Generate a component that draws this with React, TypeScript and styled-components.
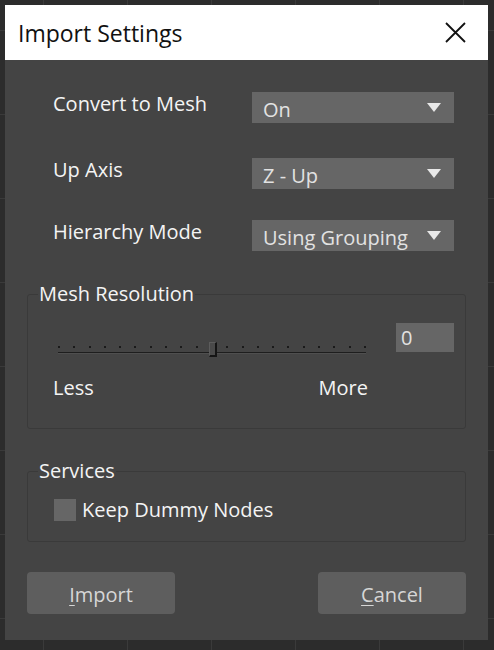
import styled, { createGlobalStyle } from 'styled-components'

const GlobalStyle = createGlobalStyle`
  html, body {
    margin: 0;
    padding: 0;
    background: #2c2c2c;
    font-family: "Open Sans", "Noto Sans", sans-serif;
  }
  * {
    box-sizing: border-box;
  }
`

const Page = styled.div`
  width: 494px;
  height: 650px;
  padding: 5px;
  background-color: #2c2c2c;
  background-image:
    linear-gradient(#3a3a3a 1px, transparent 1px),
    linear-gradient(90deg, #3a3a3a 1px, transparent 1px);
  background-size: 84px 84px;
  background-position: 43px 30px;
`

const Dialog = styled.div`
  width: 483px;
  height: 635px;
  background: #444444;
  display: flex;
  flex-direction: column;
`

const TitleBar = styled.div`
  height: 55px;
  flex-shrink: 0;
  background: #ffffff;
  display: flex;
  align-items: center;
  justify-content: space-between;
  padding: 0 22px 0 13px;
`

const Title = styled.div`
  font-size: 23px;
  color: #111;
  line-height: 1;
  margin-top: 1px;
`

const CloseButton = styled.div`
  width: 22px;
  height: 22px;
  display: flex;
  align-items: center;
  justify-content: center;
`

const Body = styled.div`
  padding: 32px 22px 0;
  display: flex;
  flex-direction: column;
`

const Row = styled.div<{ $top: number }>`
  display: flex;
  align-items: flex-start;
  padding: 0 12px 0 26px;
  margin-top: ${(p) => p.$top}px;
`

const Label = styled.div`
  flex: 1;
  font-size: 20px;
  line-height: 24px;
  color: #f4f4f4;
`

const Select = styled.div`
  width: 202px;
  height: 31px;
  background: #666666;
  display: flex;
  align-items: center;
  justify-content: space-between;
  padding: 3px 13px 0 11px;
  font-size: 20px;
  color: #e2e2e2;
`

const Arrow = styled.div`
  width: 0;
  height: 0;
  border-left: 7px solid transparent;
  border-right: 7px solid transparent;
  border-top: 9px solid #e8e8e8;
  margin-top: -3px;
`

const Group = styled.fieldset<{ $top: number }>`
  margin: ${(p) => p.$top}px 0 0;
  padding: 0;
  border: 1px solid #3a3a3a;
  border-radius: 3px;
  min-inline-size: 0;
`

const Legend = styled.legend`
  margin-left: 10px;
  padding: 0 1px;
  font-size: 20px;
  line-height: 24px;
  color: #f4f4f4;
`

const MeshContent = styled.div`
  display: grid;
  grid-template-columns: 1fr auto;
  padding: 17px 11px 28px 25px;
`

const SliderColumn = styled.div`
  display: flex;
  flex-direction: column;
`

const Slider = styled.div`
  position: relative;
  width: 308px;
  height: 36px;
  margin-left: 5px;
`

const Ticks = styled.div`
  position: absolute;
  left: 0;
  right: 0;
  top: 23px;
  display: flex;
  justify-content: space-between;
`

const Tick = styled.span`
  width: 2px;
  height: 2px;
  background: #1a1a1a;
`

const Track = styled.div`
  position: absolute;
  left: 0;
  right: 0;
  top: 29px;
  height: 2px;
  background: #1e1e1e;
  border-bottom: 1px solid #4f4f4f;
`

const Thumb = styled.div`
  position: absolute;
  top: 19px;
  width: 8px;
  height: 15px;
  background: #4a4a4a;
  border-left: 1px solid #5c5c5c;
  border-top: 1px solid #5c5c5c;
  border-right: 2px solid #151515;
  border-bottom: 2px solid #151515;
`

const EndLabels = styled.div`
  display: flex;
  justify-content: space-between;
  width: 315px;
  margin-top: 17px;
  font-size: 20px;
  line-height: 24px;
  color: #f4f4f4;
`

const NumberBox = styled.div`
  width: 58px;
  height: 29px;
  background: #666666;
  padding: 1px 5px 0;
  font-size: 20px;
  line-height: 28px;
  color: #e2e2e2;
`

const ServicesContent = styled.div`
  padding: 16px 12px 20px 26px;
  display: flex;
  align-items: center;
  gap: 6px;
`

const CheckBox = styled.div`
  width: 22px;
  height: 22px;
  background: #666666;
`

const CheckLabel = styled.div`
  font-size: 20px;
  line-height: 22px;
  color: #f4f4f4;
`

const ButtonRow = styled.div`
  display: flex;
  justify-content: space-between;
  margin-top: 30px;
`

const Button = styled.div`
  width: 148px;
  height: 42px;
  border-radius: 4px;
  background: #5e5e5e;
  display: flex;
  align-items: center;
  justify-content: center;
  padding-top: 2px;
  font-size: 20px;
  color: #d6d6d6;
`

const Mnemonic = styled.span`
  text-decoration: underline;
  text-underline-offset: 3px;
  text-decoration-thickness: 1px;
`

const settings = [
  { label: 'Convert to Mesh', value: 'On', top: 0 },
  { label: 'Up Axis', value: 'Z - Up', top: 35 },
  { label: 'Hierarchy Mode', value: 'Using Grouping', top: 31 },
]

const TICKS = 21
const resolution = 0.5

export default function App() {
  return (
    <>
      <GlobalStyle />
      <Page>
        <Dialog>
          <TitleBar>
            <Title>Import Settings</Title>
            <CloseButton>
              <svg width="21" height="21" viewBox="0 0 21 21">
                <path d="M1 1 L20 20 M20 1 L1 20" stroke="#111" strokeWidth="1.8" />
              </svg>
            </CloseButton>
          </TitleBar>
          <Body>
            {settings.map((s) => (
              <Row key={s.label} $top={s.top}>
                <Label>{s.label}</Label>
                <Select>
                  <span>{s.value}</span>
                  <Arrow />
                </Select>
              </Row>
            ))}

            <Group $top={31}>
              <Legend>Mesh Resolution</Legend>
              <MeshContent>
                <SliderColumn>
                  <Slider>
                    <Ticks>
                      {Array.from({ length: TICKS }).map((_, i) => (
                        <Tick key={i} />
                      ))}
                    </Ticks>
                    <Track />
                    <Thumb style={{ left: `calc(${resolution * 100}% - 3px)` }} />
                  </Slider>
                  <EndLabels>
                    <span>Less</span>
                    <span>More</span>
                  </EndLabels>
                </SliderColumn>
                <NumberBox>0</NumberBox>
              </MeshContent>
            </Group>

            <Group $top={30}>
              <Legend>Services</Legend>
              <ServicesContent>
                <CheckBox />
                <CheckLabel>Keep Dummy Nodes</CheckLabel>
              </ServicesContent>
            </Group>

            <ButtonRow>
              <Button>
                <span>
                  <Mnemonic>I</Mnemonic>mport
                </span>
              </Button>
              <Button>
                <span>
                  <Mnemonic>C</Mnemonic>ancel
                </span>
              </Button>
            </ButtonRow>
          </Body>
        </Dialog>
      </Page>
    </>
  )
}
